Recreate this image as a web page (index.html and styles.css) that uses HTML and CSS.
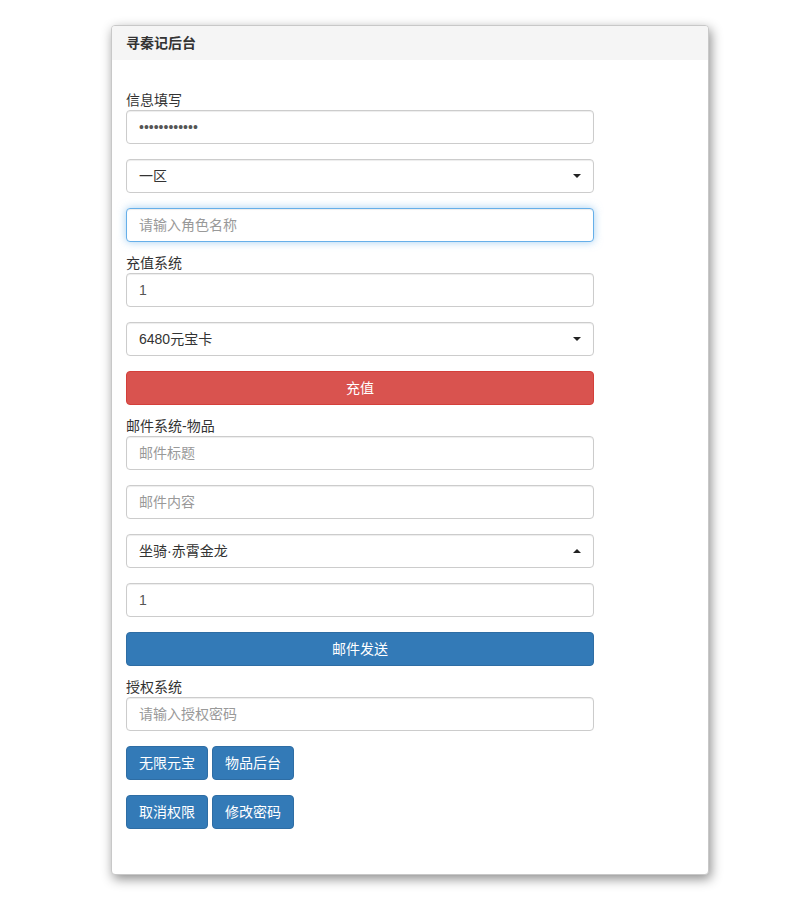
FILE: index.html
```html
<html>
<head>
    <title>寻秦记后台</title>
    <meta charset="utf-8">
    <link rel="stylesheet" href="styles.css">
</head>
<body>
<div class="panel">
    <div class="panel-heading">寻秦记后台</div>
    <div class="panel-body">
        <form class="form">
            <div class="group">
                <label>信息填写</label>
                <div class="stack">
                    <input type="password" class="field" value="abcdefghijkl">
                    <div class="field select">
                        <span>一区</span>
                        <svg width="8" height="4" viewBox="0 0 8 4"><path d="M0 0 L8 0 L4 4 Z" fill="#222"/></svg>
                    </div>
                    <input type="text" class="field focused" placeholder="请输入角色名称">
                </div>
            </div>

            <div class="group">
                <label>充值系统</label>
                <div class="stack">
                    <input type="text" class="field" value="1">
                    <div class="field select">
                        <span>6480元宝卡</span>
                        <svg width="8" height="4" viewBox="0 0 8 4"><path d="M0 0 L8 0 L4 4 Z" fill="#222"/></svg>
                    </div>
                    <button type="button" class="btn btn-danger btn-block">充值</button>
                </div>
            </div>

            <div class="group">
                <label>邮件系统-物品</label>
                <div class="stack">
                    <input type="text" class="field" placeholder="邮件标题">
                    <input type="text" class="field" placeholder="邮件内容">
                    <div class="field select">
                        <span>坐骑·赤霄金龙</span>
                        <svg width="8" height="4" viewBox="0 0 8 4"><path d="M0 4 L8 4 L4 0 Z" fill="#222"/></svg>
                    </div>
                    <input type="text" class="field" value="1">
                    <button type="button" class="btn btn-primary btn-block">邮件发送</button>
                </div>
            </div>

            <div class="group">
                <label>授权系统</label>
                <div class="stack">
                    <input type="text" class="field" placeholder="请输入授权密码">
                    <div class="btn-row">
                        <button type="button" class="btn btn-primary">无限元宝</button>
                        <button type="button" class="btn btn-primary">物品后台</button>
                    </div>
                    <div class="btn-row">
                        <button type="button" class="btn btn-primary">取消权限</button>
                        <button type="button" class="btn btn-primary">修改密码</button>
                    </div>
                </div>
            </div>
        </form>
    </div>
</div>
</body>
</html>
```

FILE: styles.css
```css
body {
    font-family: 'Liberation Sans', 'Noto Sans CJK SC', sans-serif;
    font-size: 14px;
    line-height: 20px;
    color: #333;
    background: #fff;
    margin: 0;
    padding: 25px 0 0 111px;
}

.panel {
    width: 598px;
    box-sizing: border-box;
    background: #fff;
    border: 1px solid #c8c8c8;
    border-radius: 4px;
    box-shadow: 2px 4px 12px rgba(0, 0, 0, 0.45);
    overflow: hidden;
}

.panel-heading {
    height: 34px;
    line-height: 34px;
    padding: 0 14px;
    background: #f5f5f5;
    font-weight: bold;
    color: #333;
}

.panel-body {
    padding: 30px 14px 45px;
}

.form {
    width: 468px;
    display: flex;
    flex-direction: column;
    gap: 11px;
    margin: 0;
}

.group label {
    display: block;
    height: 20px;
    line-height: 20px;
    color: #333;
}

.stack {
    display: flex;
    flex-direction: column;
    gap: 15px;
}

.field {
    display: block;
    width: 100%;
    height: 34px;
    box-sizing: border-box;
    padding: 6px 12px;
    font-family: inherit;
    font-size: 14px;
    line-height: 20px;
    color: #555;
    background: #fff;
    border: 1px solid #ccc;
    border-radius: 4px;
    box-shadow: inset 0 1px 1px rgba(0, 0, 0, 0.075);
    outline: none;
    margin: 0;
}

.field::placeholder {
    color: #999;
}

.field.focused {
    border-color: #66afe9;
    box-shadow: inset 0 1px 1px rgba(0, 0, 0, 0.075), 0 0 8px rgba(102, 175, 233, 0.6);
}

.select {
    display: flex;
    align-items: center;
    justify-content: space-between;
    color: #333;
}

.btn {
    height: 34px;
    box-sizing: border-box;
    padding: 6px 12px;
    font-family: inherit;
    font-size: 14px;
    line-height: 20px;
    color: #fff;
    border: 1px solid transparent;
    border-radius: 4px;
    cursor: pointer;
    margin: 0;
}

.btn-block {
    display: block;
    width: 100%;
}

.btn-danger {
    background: #d9534f;
    border-color: #d43f3a;
}

.btn-primary {
    background: #337ab7;
    border-color: #2e6da4;
}

.btn-row {
    display: flex;
    gap: 4px;
}
```
